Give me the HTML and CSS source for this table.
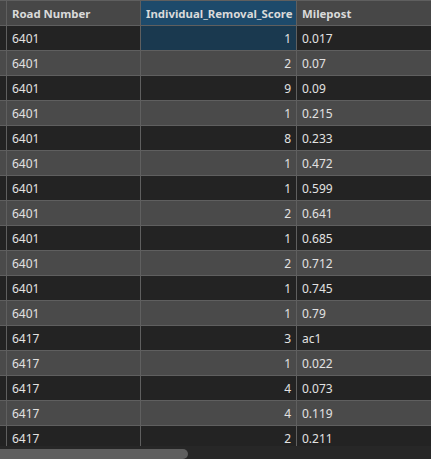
FILE: index.html
```html
<!DOCTYPE html>
<html>
<head>
<meta charset="utf-8">
<link rel="stylesheet" href="styles.css">
</head>
<body>
<div class="view">
  <div class="grid">
    <div class="cell head gut"></div>
    <div class="cell head">Road Number</div>
    <div class="cell head sel">Individual_Removal_Score</div>
    <div class="cell head">Milepost</div>

    <div class="cell d gut"></div><div class="cell d">6401</div><div class="cell d num selcell">1</div><div class="cell d">0.017</div>
    <div class="cell l gut"></div><div class="cell l">6401</div><div class="cell l num">2</div><div class="cell l">0.07</div>
    <div class="cell d gut"></div><div class="cell d">6401</div><div class="cell d num">9</div><div class="cell d">0.09</div>
    <div class="cell l gut"></div><div class="cell l">6401</div><div class="cell l num">1</div><div class="cell l">0.215</div>
    <div class="cell d gut"></div><div class="cell d">6401</div><div class="cell d num">8</div><div class="cell d">0.233</div>
    <div class="cell l gut"></div><div class="cell l">6401</div><div class="cell l num">1</div><div class="cell l">0.472</div>
    <div class="cell d gut"></div><div class="cell d">6401</div><div class="cell d num">1</div><div class="cell d">0.599</div>
    <div class="cell l gut"></div><div class="cell l">6401</div><div class="cell l num">2</div><div class="cell l">0.641</div>
    <div class="cell d gut"></div><div class="cell d">6401</div><div class="cell d num">1</div><div class="cell d">0.685</div>
    <div class="cell l gut"></div><div class="cell l">6401</div><div class="cell l num">2</div><div class="cell l">0.712</div>
    <div class="cell d gut"></div><div class="cell d">6401</div><div class="cell d num">1</div><div class="cell d">0.745</div>
    <div class="cell l gut"></div><div class="cell l">6401</div><div class="cell l num">1</div><div class="cell l">0.79</div>
    <div class="cell d gut"></div><div class="cell d">6417</div><div class="cell d num">3</div><div class="cell d">ac1</div>
    <div class="cell l gut"></div><div class="cell l">6417</div><div class="cell l num">1</div><div class="cell l">0.022</div>
    <div class="cell d gut"></div><div class="cell d">6417</div><div class="cell d num">4</div><div class="cell d">0.073</div>
    <div class="cell l gut"></div><div class="cell l">6417</div><div class="cell l num">4</div><div class="cell l">0.119</div>
    <div class="cell d gut"></div><div class="cell d">6417</div><div class="cell d num">2</div><div class="cell d">0.211</div>
  </div>
  <div class="hscroll"><div class="thumb"></div></div>
</div>
</body>
</html>
```
FILE: styles.css
```css
html, body {
  margin: 0;
  padding: 0;
  background: #232323;
}
.view {
  width: 431px;
  height: 459px;
  overflow: hidden;
  display: flex;
  flex-direction: column;
  font-family: "Noto Sans", "Open Sans", sans-serif;
  font-size: 12px;
}
.grid {
  height: 448px;
  overflow: hidden;
  display: grid;
  grid-template-columns: 6px 133px 155px 1fr;
  grid-auto-rows: 24px;
  gap: 1px;
  padding-top: 1px;
  background: #5f5f5f;
  align-content: start;
}
.cell {
  display: flex;
  align-items: center;
  padding: 0 5px;
  color: #e2e2e2;
  white-space: nowrap;
  overflow: hidden;
}
.gut { padding: 0; }
.head {
  background: #474747;
  font-weight: bold;
  font-size: 11.4px;
  color: #dadada;
}
.head.sel { background: #1d4a6b; }
.d { background: #232323; }
.l { background: #4a4a4a; }
.num { justify-content: flex-end; }
.selcell { background: #1a394f; }
.hscroll {
  flex: 1;
  background: #272727;
  padding-top: 3px;
}
.thumb {
  width: 188px;
  height: 10px;
  background: #5f5f5f;
  border-radius: 0 5px 5px 0;
}
```
